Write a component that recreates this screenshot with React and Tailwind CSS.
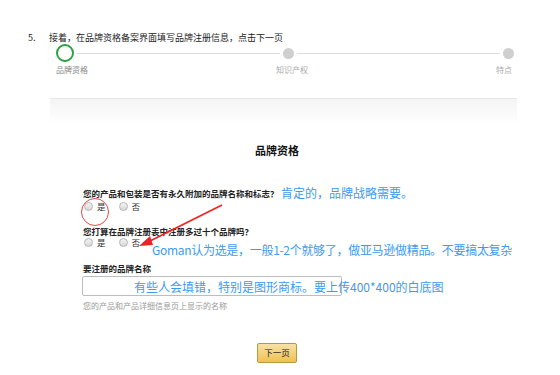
const cjk = { fontFamily: '"Noto Sans CJK SC", "Noto Sans", sans-serif' };

function Radio({ label }) {
  return (
    <label className="flex items-center gap-[4px]">
      <span className="w-[9px] h-[9px] rounded-full border border-[#b5b5b5] bg-gradient-to-b from-[#f4f4f4] to-[#d8d8d8]" />
      <span className="text-[8.5px] text-[#333]">{label}</span>
    </label>
  );
}

function Stepper() {
  return (
    <div className="ml-[56px] w-[458px]">
      <div className="flex items-center h-[20px]">
        <span className="w-[18px] h-[18px] rounded-full border-2 border-[#2ea043] bg-white" />
        <span className="flex-1 h-px bg-[#dcdcdc] mx-[3px]" />
        <span className="w-[11px] h-[11px] rounded-full bg-[#cfcfcf]" />
        <span className="flex-1 h-px bg-[#dcdcdc] mx-[3px]" />
        <span className="w-[11px] h-[11px] rounded-full bg-[#cfcfcf]" />
      </div>
      <div className="flex justify-between text-[8px] text-[#888] mt-[3px] leading-none">
        <span>品牌资格</span>
        <span className="text-[#aaa]">知识产权</span>
        <span className="text-[#aaa] mr-[2px]">特点</span>
      </div>
    </div>
  );
}

export default function App() {
  return (
    <div className="w-[560px] h-[375px] bg-white relative overflow-hidden" style={cjk}>
      <div className="flex items-center pt-[33px] text-[9px] text-[#222] leading-none">
        <span className="ml-[28px] w-[21px]">5.</span>
        <span>接着，在品牌资格备案界面填写品牌注册信息，点击下一页</span>
      </div>
      <div className="mt-[1px]">
        <Stepper />
      </div>
      <div className="mx-[50px] mt-[24px] w-[467px] border-t border-[#e8e8e8] h-[26px] bg-gradient-to-b from-[#f4f4f4] to-white" />
      <h2 className="text-center text-[11px] font-bold text-[#111] mt-[21px] pr-[6px] leading-none">品牌资格</h2>

      <div className="ml-[83px] mt-[33px] text-[8.5px] text-[#222] leading-none">
        <p className="font-bold">您的产品和包装是否有永久附加的品牌名称和标志？</p>
        <div className="flex gap-[13px] mt-[4px] ml-[1px]">
          <Radio label="是" />
          <Radio label="否" />
        </div>
        <p className="font-bold mt-[16px]">您打算在品牌注册表中注册多过十个品牌吗？</p>
        <div className="flex gap-[13px] mt-[3px] ml-[1px]">
          <Radio label="是" />
          <Radio label="否" />
        </div>
        <p className="font-bold mt-[17px]">要注册的品牌名称</p>
        <div className="w-[260px] h-[20px] mt-[3px] -ml-[1px] border border-[#bdbdbd] rounded-[2px] bg-white" />
        <p className="mt-[6px] text-[#999] text-[8px]">您的产品和产品详细信息页上显示的名称</p>
      </div>

      <div className="flex justify-center mt-[33px] pr-[6px]">
        <button className="w-[40px] h-[20px] text-[8.5px] text-[#222] border border-[#b8993f] rounded-[2px] bg-gradient-to-b from-[#f8e2a6] to-[#efc14e]">
          下一页
        </button>
      </div>

      <span className="absolute left-[281px] top-[187px] text-[12px] text-[#3d9bf0] leading-none">肯定的，品牌战略需要。</span>
      <span className="absolute left-[152px] top-[244px] text-[12px] tracking-[-0.3px] text-[#3d9bf0] leading-none">Goman认为选是，一般1-2个就够了，做亚马逊做精品。不要搞太复杂</span>
      <span className="absolute left-[134px] top-[281px] text-[12px] text-[#3d9bf0] leading-none">有些人会填错，特别是图形商标。要上传400*400的白底图</span>

      <span className="absolute left-[81px] top-[198px] w-[28px] h-[28px] rounded-full border border-[#ee4444]" />
      <svg className="absolute left-0 top-0" width="560" height="375" viewBox="0 0 560 375">
        <line x1="222" y1="205" x2="148" y2="242" stroke="#ee2222" strokeWidth="1.8" />
        <polygon points="139,246 150,236 153,245" fill="#ee2222" />
      </svg>
    </div>
  );
}
